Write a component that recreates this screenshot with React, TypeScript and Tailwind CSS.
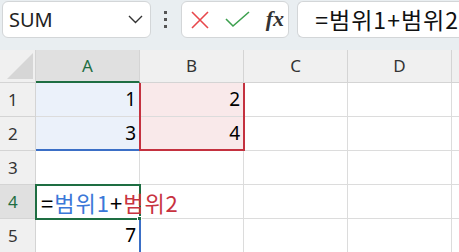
import React from "react";

const cols = ["A", "B", "C", "D"];
const rows = [1, 2, 3, 4, 5];

const font = { fontFamily: '"Noto Sans", "Noto Sans CJK KR", sans-serif' };
const kr = { fontFamily: '"Noto Sans CJK KR", sans-serif' };

function Cell({ r, c }: { r: number; c: number }) {
  let bg = "bg-white";
  if (c === 0 && r <= 2) bg = "bg-[#ebf1fa]";
  if (c === 1 && r <= 2) bg = "bg-[#f9e9ea]";
  const values: Record<string, string> = { "1-0": "1", "2-0": "3", "1-1": "2", "2-1": "4", "5-0": "7" };
  const v = values[`${r}-${c}`];
  return (
    <div className={`${bg} border-r border-b border-[#dcdcdc] flex items-center justify-end pr-[3px] text-[19px] text-black`}>
      {v}
    </div>
  );
}

export default function App() {
  return (
    <main className="w-[459px] h-[252px] overflow-hidden bg-white relative" style={font}>
      {/* formula bar */}
      <div className="h-[50px] bg-[#e9eef1] flex items-start pt-[1px] pl-[2px] gap-0">
        <div className="w-[151px] h-[37px] bg-white border border-[#d3d6d8] rounded-[6px] flex items-center justify-between pl-[6px] pr-[7px]">
          <span className="text-[20px] text-[#222]">SUM</span>
          <svg width="15" height="9" viewBox="0 0 15 9">
            <path d="M1 1 L7.5 7.5 L14 1" fill="none" stroke="#333" strokeWidth="1.4" />
          </svg>
        </div>
        <div className="w-[30px] h-[37px] flex flex-col items-center justify-center gap-[4px]">
          <span className="w-[3px] h-[3px] bg-[#555]" />
          <span className="w-[3px] h-[3px] bg-[#555]" />
          <span className="w-[3px] h-[3px] bg-[#555]" />
        </div>
        <div className="w-[110px] h-[37px] bg-white border border-[#d3d6d8] rounded-[6px] flex items-center pl-[9px] gap-[16px]">
          <svg width="18" height="18" viewBox="0 0 18 18">
            <path d="M1 1 L17 17 M17 1 L1 17" stroke="#e8474b" strokeWidth="1.6" />
          </svg>
          <svg width="25" height="17" viewBox="0 0 25 17">
            <path d="M1 8 L8 15 L24 1" fill="none" stroke="#3da04f" strokeWidth="1.6" />
          </svg>
          <span className="text-[22px] italic text-[#333] -mt-[3px] font-semibold" style={{ fontFamily: '"Liberation Serif", serif' }}>
            fx
          </span>
        </div>
        <div className="ml-[8px] flex-1 h-[37px] bg-white border border-r-0 border-[#d3d6d8] rounded-l-[6px] flex items-center pl-[17px]">
          <span className="text-[23px] tracking-[1px] text-[#111] whitespace-nowrap" style={kr}>
            =범위1+범위2
          </span>
        </div>
      </div>

      {/* sheet */}
      <div className="relative grid grid-cols-[36px_104px_104px_104px_104px_1fr] grid-rows-[33px_34px_34px_34px_34px_34px]">
        <div className="bg-[#f0f0f0] border-r border-b border-[#d4d4d4] relative">
          <svg className="absolute left-[7px] top-[3px]" width="27" height="27" viewBox="0 0 27 27">
            <path d="M26 0 L26 26 L0 26 Z" fill="#d6d6d6" />
          </svg>
        </div>
        {cols.map((c, i) => (
          <div
            key={c}
            className={`flex items-center justify-center text-[17px] border-r border-[#d4d4d4] ${
              i === 0 ? "bg-[#e0e0e0] border-b-2 border-b-[#1e6e42] text-[#1e6e42]" : "bg-[#f0f0f0] border-b text-[#333]"
            }`}
          >
            {c}
          </div>
        ))}
        <div className="bg-[#f0f0f0] border-b border-[#d4d4d4]" />

        {rows.map((r) => (
          <React.Fragment key={r}>
            <div
              className={`flex items-center pl-[8px] text-[17px] border-r border-b border-[#d4d4d4] ${
                r === 4 ? "bg-[#e0e0e0] text-[#1e6e42]" : "bg-[#f0f0f0] text-[#333]"
              }`}
            >
              {r}
            </div>
            {cols.map((c, ci) => (
              <Cell key={c} r={r} c={ci} />
            ))}
            <div className="bg-white border-b border-[#dcdcdc]" />
          </React.Fragment>
        ))}

        {/* range 1 highlight (A1:A2) */}
        <div className="absolute left-[36px] top-[33px] w-[105px] h-[68px] border-b-2 border-[#3b6fc6] pointer-events-none" />
        {/* range 2 highlight (B1:B2) */}
        <div className="absolute left-[139px] top-[33px] w-[106px] h-[68px] border-2 border-t-0 border-[#c4313f] pointer-events-none" />
        {/* active cell A4 */}
        <div className="absolute left-[35px] top-[134px] w-[106px] h-[36px] border-2 border-[#1e6e42] bg-white flex items-center pl-[4px] overflow-visible">
          <span className="text-[22px] tracking-[1px] whitespace-nowrap text-black" style={kr}>
            =<span className="text-[#3b78d8]">범위1</span>+<span className="text-[#c8333f]">범위2</span>
          </span>
        </div>
        <div className="absolute left-[137px] top-[166px] w-[5px] h-[5px] bg-[#1e6e42] border border-white" />
        {/* cursor line on A5 */}
        <div className="absolute left-[139px] top-[170px] w-[2px] h-[40px] bg-[#3b6fc6]" />
      </div>
    </main>
  );
}
